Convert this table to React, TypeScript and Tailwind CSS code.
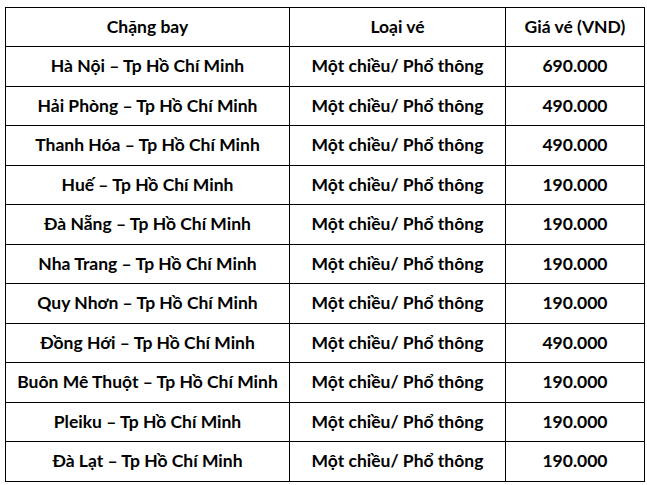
const rows: [string, string][] = [
  ["Hà Nội – Tp Hồ Chí Minh", "690.000"],
  ["Hải Phòng – Tp Hồ Chí Minh", "490.000"],
  ["Thanh Hóa – Tp Hồ Chí Minh", "490.000"],
  ["Huế – Tp Hồ Chí Minh", "190.000"],
  ["Đà Nẵng – Tp Hồ Chí Minh", "190.000"],
  ["Nha Trang – Tp Hồ Chí Minh", "190.000"],
  ["Quy Nhơn – Tp Hồ Chí Minh", "190.000"],
  ["Đồng Hới – Tp Hồ Chí Minh", "490.000"],
  ["Buôn Mê Thuột – Tp Hồ Chí Minh", "190.000"],
  ["Pleiku – Tp Hồ Chí Minh", "190.000"],
  ["Đà Lạt – Tp Hồ Chí Minh", "190.000"],
];

export default function App() {
  return (
    <main className="w-[647px] h-[485px] bg-white pl-[5px] pt-[7px] font-['Lato',sans-serif] font-bold text-[17.5px] text-black">
      <table className="border-collapse">
        <thead>
          <tr className="h-[39px]">
            <th className="w-[284px] border border-black p-0 text-center font-bold">Chặng bay</th>
            <th className="w-[216px] border border-black p-0 text-center font-bold">Loại vé</th>
            <th className="w-[139px] border border-black p-0 text-center font-bold">Giá vé (VND)</th>
          </tr>
        </thead>
        <tbody>
          {rows.map(([route, price], i) => (
            <tr key={route} className={i % 2 === 0 ? "h-[40px]" : "h-[39px]"}>
              <td className="border border-black p-0 text-center">{route}</td>
              <td className="border border-black p-0 text-center">Một chiều/ Phổ thông</td>
              <td className="border border-black p-0 text-center">{price}</td>
            </tr>
          ))}
        </tbody>
      </table>
    </main>
  );
}
